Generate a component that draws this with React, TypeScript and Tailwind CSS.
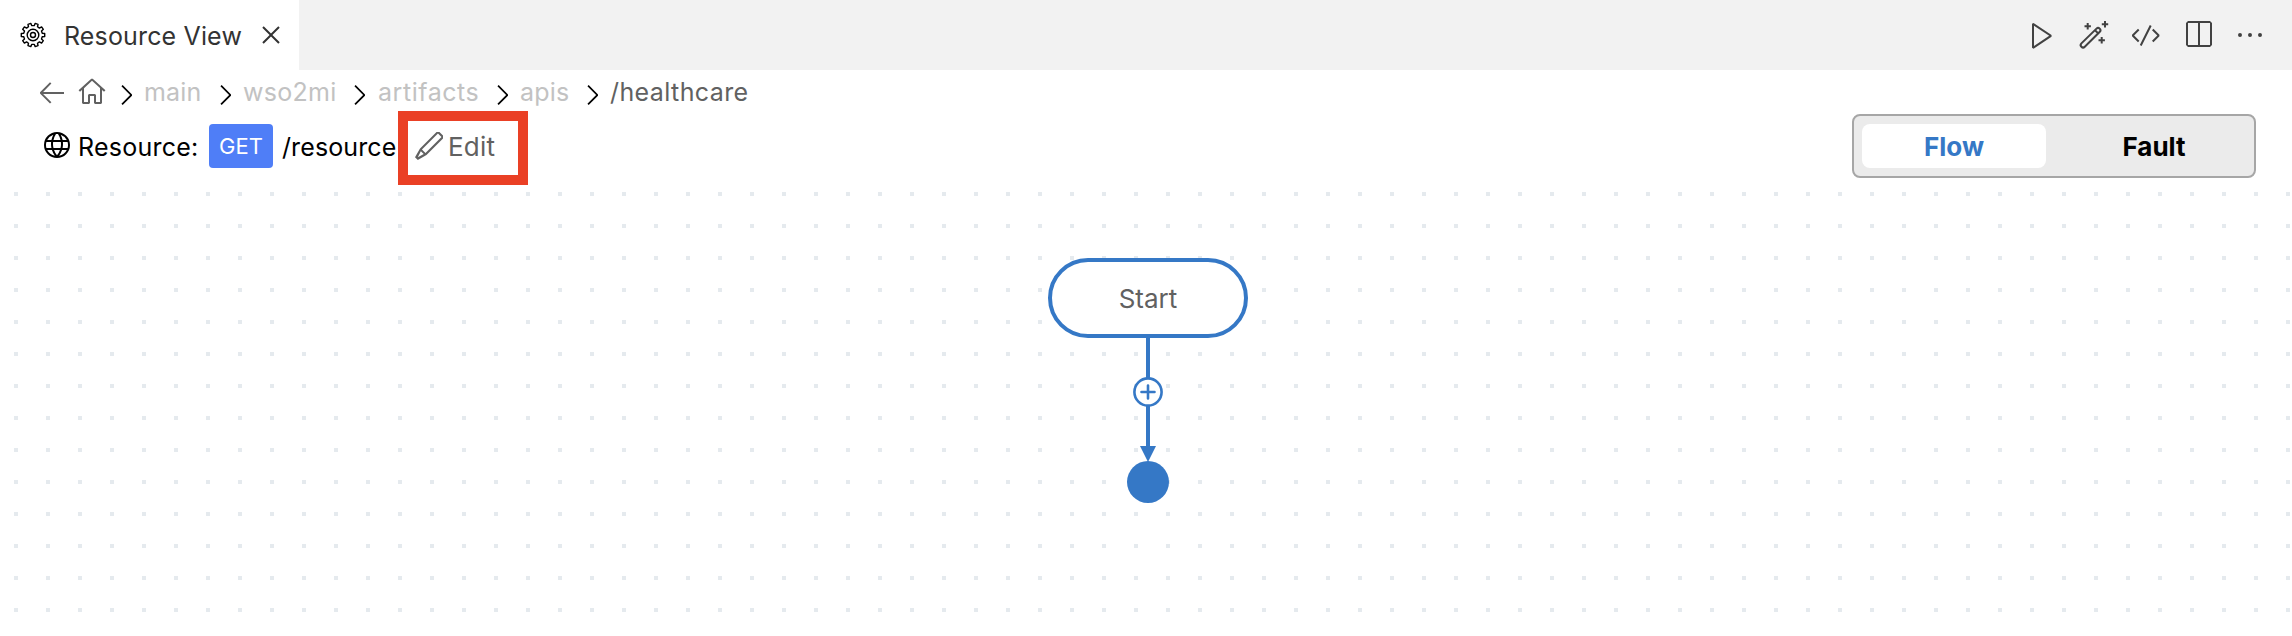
import React from "react";
import {
  VscArrowLeft,
  VscChevronRight,
  VscClose,
  VscCode,
  VscEdit,
  VscEllipsis,
  VscGlobe,
  VscHome,
  VscPlay,
  VscSplitHorizontal,
} from "react-icons/vsc";

const FONT = "font-['Inter','Liberation_Sans',sans-serif]";

function gearPath(cx: number, cy: number, teeth: number, inner: number, outer: number) {
  const pts: string[] = [];
  const step = (Math.PI * 2) / teeth;
  for (let i = 0; i < teeth; i++) {
    const a = i * step - Math.PI / 2 + step / 2;
    const at = (r: number, t: number) =>
      `${(cx + r * Math.cos(t)).toFixed(2)} ${(cy + r * Math.sin(t)).toFixed(2)}`;
    pts.push(
      at(inner, a - step * 0.3),
      at(outer, a - step * 0.2),
      at(outer, a + step * 0.2),
      at(inner, a + step * 0.3),
    );
  }
  return `M${pts.join("L")}Z`;
}

function GearIcon() {
  return (
    <svg className="h-[28px] w-[28px] shrink-0" viewBox="0 0 28 28" fill="none" stroke="#000" strokeWidth="1.4" strokeLinejoin="round">
      <path d={gearPath(14, 14, 10, 9.4, 11.8)} />
      <circle cx="14" cy="14" r="5.8" />
      <circle cx="14" cy="14" r="2.5" />
    </svg>
  );
}

function WandIcon() {
  return (
    <svg className="h-8 w-8" viewBox="0 1 32 32" fill="none" stroke="currentColor" strokeWidth="2">
      <path d="M3.4 25.4 18.5 10.6a2.3 2.3 0 0 1 3.3 3.2L6.8 28.8a2.4 2.4 0 0 1-3.4-3.4Z" />
      <path d="m17 12.2 3.2 3.2" />
      <path d="M9.7 5v6.4M6.5 8.2h6.4M27 3v6.4M23.8 6.2h6.4M23.7 19v6.4M20.5 22.2h6.4" />
    </svg>
  );
}

const crumbs = [
  { name: "main", box: "ml-[2px] w-[65px] tracking-[0.2px] text-[#c2c2c2]" },
  { name: "wso2mi", box: "ml-[2px] w-[100px] tracking-[0.3px] text-[#c2c2c2]" },
  { name: "artifacts", box: "ml-[3px] w-[108px] tracking-[0.55px] text-[#c2c2c2]" },
  { name: "apis", box: "ml-[2px] w-[56px] tracking-[0.2px] text-[#c2c2c2]" },
  { name: "/healthcare", box: "ml-[2px] tracking-[0.4px] text-[#616161]" },
];

export default function App() {
  return (
    <div className={`flex h-[636px] w-full flex-col overflow-hidden bg-white text-[25px] leading-8 font-[430] whitespace-nowrap ${FONT}`}>
      <header className="flex h-[70px] shrink-0 justify-between bg-[#f2f2f2]">
        <div className="flex w-[299px] items-center bg-white pl-[19px] text-[#333]">
          <GearIcon />
          <span className="mt-px ml-[17px] w-[180px] tracking-[0.15px]">Resource View</span>
          <VscClose className="ml-[11px] h-8 w-8 shrink-0" />
        </div>
        <div className="flex items-center gap-5 pr-[26px] text-[#424242]">
          <VscPlay className="h-8 w-8" />
          <WandIcon />
          <VscCode className="h-8 w-8" />
          <VscSplitHorizontal className="h-8 w-8" />
          <VscEllipsis className="h-8 w-8" />
        </div>
      </header>

      <nav className="flex h-[44px] shrink-0 items-center pl-[36px]">
        <VscArrowLeft className="h-8 w-8 shrink-0 text-[#616161]" />
        <VscHome className="ml-2 h-8 w-8 shrink-0 text-[#616161]" />
        {crumbs.map((c, i) => (
          <React.Fragment key={c.name}>
            <VscChevronRight className={`mt-[5px] h-8 w-8 shrink-0 text-black ${i === 0 ? "ml-[2px]" : ""}`} />
            <span className={c.box}>{c.name}</span>
          </React.Fragment>
        ))}
      </nav>

      <section className="flex h-[72px] shrink-0 items-start justify-between pr-9 pl-[40px]">
        <div className="-mt-[3px] flex h-[74px] items-start">
          <div className="flex h-[70px] items-center">
            <VscGlobe className="h-8 w-8 shrink-0 text-black" />
            <span className="mt-[2px] ml-[6px] w-[131px] tracking-[0.25px] text-black">Resource:</span>
            <span className="flex h-[44px] w-[64px] items-center justify-center rounded-[4px] bg-[#4f7ef7] text-[22px] text-white">GET</span>
            <span className="mt-[2px] ml-[9px] w-[116px] tracking-[0.1px] text-black">/resource</span>
          </div>
          <div className="flex h-[74px] w-[130px] items-center border-[10px] border-[#ea4025] pb-[4px] pl-[5px] text-[#616161]">
            <VscEdit className="h-8 w-8 shrink-0" />
            <span className="mt-px ml-[3px] text-[26px] tracking-[0.2px]">Edit</span>
          </div>
        </div>
        <div className="flex h-16 w-[404px] items-center gap-4 rounded-[8px] border-2 border-[#a6a6a6] bg-[#ebebeb] px-2 text-[26px] font-bold">
          <button className="h-[44px] w-[184px] rounded-[8px] bg-white pt-px text-[#3578c6]">Flow</button>
          <button className="h-[44px] w-[184px] pt-px text-black">Fault</button>
        </div>
      </section>

      <main className="relative flex-1">
        <svg className="absolute inset-0 h-full w-full" shapeRendering="crispEdges">
          <defs>
            <pattern id="dots" x="14" y="6" width="32" height="32" patternUnits="userSpaceOnUse">
              <rect width="4" height="4" fill="#e5eaee" />
            </pattern>
          </defs>
          <rect width="100%" height="100%" fill="url(#dots)" />
        </svg>
        <div className="absolute top-[72px] left-[1048px] flex h-20 w-[200px] items-center justify-center rounded-[40px] border-4 border-[#3578c6] bg-white pt-px text-[26px] text-[#616161]">
          Start
        </div>
        <svg className="absolute top-[152px] left-[1118px] h-[166px] w-[60px]" viewBox="0 0 60 166">
          <path d="M30 0v110" stroke="#3578c6" strokeWidth="4" />
          <path d="M22 108h16l-8 16z" fill="#3578c6" />
          <circle cx="30" cy="54" r="13.6" fill="#fff" stroke="#3578c6" strokeWidth="2.6" />
          <path d="M30 47.5v13M23.5 54h13" stroke="#3578c6" strokeWidth="2.6" strokeLinecap="round" />
          <circle cx="30" cy="144" r="21" fill="#3578c6" />
        </svg>
      </main>
    </div>
  );
}
